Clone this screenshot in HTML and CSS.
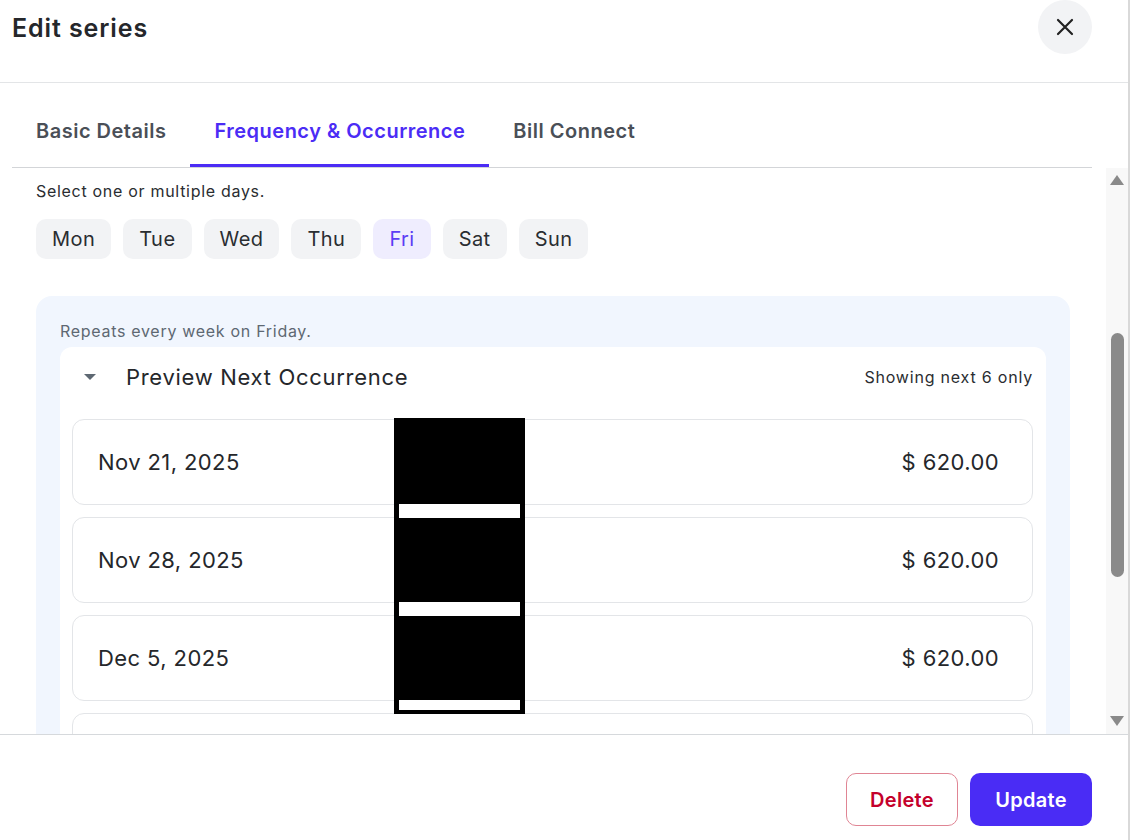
FILE: index.html
```html
<!DOCTYPE html>
<html>
<head>
<meta charset="utf-8">
<link rel="stylesheet" href="styles.css">
<title>Edit series</title>
</head>
<body>
  <div class="panel">
    <div class="panel-header">
      <h1 class="panel-title">Edit series</h1>
      <button type="button" class="close-btn" aria-label="Close">
        <svg width="20" height="20" viewBox="0 0 20 20"><path d="M3 3 L17 17 M17 3 L3 17" stroke="#222" stroke-width="2.2" stroke-linecap="round"/></svg>
      </button>
    </div>

    <div class="tabs">
      <a class="tab">Basic Details</a>
      <a class="tab tab_active">Frequency &amp; Occurrence</a>
      <a class="tab">Bill Connect</a>
    </div>

    <div class="main">
      <div class="content">
        <p class="hint">Select one or multiple days.</p>
        <div class="days">
          <button type="button" class="day">Mon</button>
          <button type="button" class="day">Tue</button>
          <button type="button" class="day">Wed</button>
          <button type="button" class="day">Thu</button>
          <button type="button" class="day day_on">Fri</button>
          <button type="button" class="day">Sat</button>
          <button type="button" class="day">Sun</button>
        </div>

        <div class="repeat-box">
          <p class="repeat-text">Repeats every week on Friday.</p>
          <div class="preview">
            <div class="preview-head">
              <span class="caret"></span>
              <span class="preview-title">Preview Next Occurrence</span>
              <span class="preview-note">Showing next 6 only</span>
            </div>
            <div class="rows">
              <div class="row"><span>Nov 21, 2025</span><span>$ 620.00</span></div>
              <div class="row"><span>Nov 28, 2025</span><span>$ 620.00</span></div>
              <div class="row"><span>Dec 5, 2025</span><span>$ 620.00</span></div>
              <div class="row row_cut"></div>
              <!-- redacted column -->
              <div class="redact">
                <div class="redact-bar bar1"></div>
                <div class="redact-bar bar2"></div>
                <div class="redact-bar bar3"></div>
              </div>
            </div>
          </div>
        </div>
      </div>
      <div class="scrollbar">
        <span class="arrow-up"></span>
        <span class="thumb"></span>
        <span class="arrow-down"></span>
      </div>
    </div>

    <div class="footer">
      <button type="button" class="btn btn_delete">Delete</button>
      <button type="button" class="btn btn_update">Update</button>
    </div>
  </div>
</body>
</html>
```

FILE: styles.css
```css
* {
  box-sizing: border-box;
}

body {
  margin: 0;
  background: #fff;
  font-family: Inter, "Noto Sans", sans-serif;
  color: #222428;
}

.panel {
  width: 1130px;
  height: 840px;
  border-right: 2px solid #d9d9d9;
  background: #fff;
  overflow: hidden;
}

/* header */
.panel-header {
  height: 83px;
  display: flex;
  align-items: flex-start;
  justify-content: space-between;
  padding: 0 36px 0 12px;
  border-bottom: 1px solid #e3e5e7;
}

.panel-title {
  margin: 0;
  font-size: 25px;
  font-weight: 600;
  letter-spacing: 0.9px;
  line-height: 56px;
  color: #25272b;
}

.close-btn {
  width: 54px;
  height: 54px;
  border: none;
  border-radius: 50%;
  background: #f2f3f5;
  display: flex;
  align-items: center;
  justify-content: center;
  padding: 0;
}

/* tabs */
.tabs {
  display: flex;
  margin: 0 36px 0 12px;
  border-bottom: 1px solid #d3d5d8;
}

.tab {
  padding: 36px 24px 21px;
  border-bottom: 3px solid transparent;
  font-size: 20px;
  font-weight: 600;
  letter-spacing: 0.5px;
  line-height: 24px;
  color: #4a4f57;
}

.tab_active {
  color: #4b2cf5;
  border-bottom-color: #4b2cf5;
}

/* main scroll area */
.main {
  height: 566px;
  display: flex;
  padding-left: 12px;
  overflow: hidden;
}

.content {
  flex: 1;
  padding: 12px 36px 0 24px;
  overflow: hidden;
}

.hint {
  margin: 0;
  font-size: 16px;
  letter-spacing: 0.7px;
  line-height: 22px;
  color: #2a2d31;
}

.days {
  display: flex;
  gap: 12px;
  margin-top: 17px;
}

.day {
  height: 40px;
  padding: 0 16px;
  margin: 0;
  border: none;
  border-radius: 10px;
  background: #f2f3f5;
  font-family: inherit;
  font-size: 20px;
  letter-spacing: 0.45px;
  color: #2a2d31;
}

.day_on {
  background: #efedfe;
  color: #5b3df5;
}

.repeat-box {
  margin-top: 37px;
  padding: 24px 24px 0;
  background: #f1f6fe;
  border-radius: 16px;
  height: 500px;
}

.repeat-text {
  margin: 0 0 4px;
  font-size: 16px;
  letter-spacing: 0.7px;
  line-height: 23px;
  color: #5e6872;
}

.preview {
  background: #fff;
  border-radius: 12px;
  padding: 0 13px 20px 12px;
}

.preview-head {
  height: 60px;
  display: flex;
  align-items: center;
  padding-left: 12px;
}

.caret {
  width: 0;
  height: 0;
  border-left: 6px solid transparent;
  border-right: 6px solid transparent;
  border-top: 6px solid #5e6872;
  margin-right: 30px;
}

.preview-title {
  flex: 1;
  font-size: 22px;
  letter-spacing: 0.7px;
  color: #25272b;
}

.preview-note {
  font-size: 16px;
  letter-spacing: 0.8px;
  color: #2a2d31;
}

.rows {
  position: relative;
  display: flex;
  flex-direction: column;
  gap: 12px;
  margin-top: 12px;
}

.row {
  height: 86px;
  flex-shrink: 0;
  display: flex;
  align-items: center;
  justify-content: space-between;
  padding: 0 33px 0 25px;
  border: 1px solid #e3e5e8;
  border-radius: 12px;
  font-size: 22px;
  letter-spacing: 0.4px;
  color: #25272b;
}

.redact {
  position: absolute;
  top: -1px;
  left: 322px;
  width: 131px;
  height: 296px;
  background: #000;
}

.redact-bar {
  position: absolute;
  left: 5px;
  right: 5px;
  background: #fff;
}

.bar1 { top: 86px; height: 14px; }
.bar2 { top: 184px; height: 14px; }
.bar3 { top: 282px; height: 10px; }

/* fake scrollbar */
.scrollbar {
  width: 22px;
  background: #f8f8f8;
  display: flex;
  flex-direction: column;
  align-items: center;
  padding: 7px 0 8px;
}

.arrow-up, .arrow-down {
  width: 0;
  height: 0;
  border-left: 7px solid transparent;
  border-right: 7px solid transparent;
}

.arrow-up {
  border-bottom: 10px solid #8a8a8a;
}

.arrow-down {
  border-top: 10px solid #8a8a8a;
}

.thumb {
  width: 13px;
  height: 244px;
  margin: 148px 0 auto;
  border-radius: 7px;
  background: #8a8a8a;
}

/* footer */
.footer {
  border-top: 1px solid #d6d9dc;
  display: flex;
  justify-content: flex-end;
  gap: 12px;
  padding: 38px 36px 0;
}

.btn {
  height: 53px;
  border-radius: 10px;
  font-family: inherit;
  font-size: 20px;
  font-weight: 600;
  letter-spacing: 0.3px;
}

.btn_delete {
  width: 112px;
  border: 1px solid #e08594;
  background: #fff;
  color: #c4002b;
}

.btn_update {
  width: 122px;
  border: none;
  background: #4a2cf5;
  color: #fff;
}
```
